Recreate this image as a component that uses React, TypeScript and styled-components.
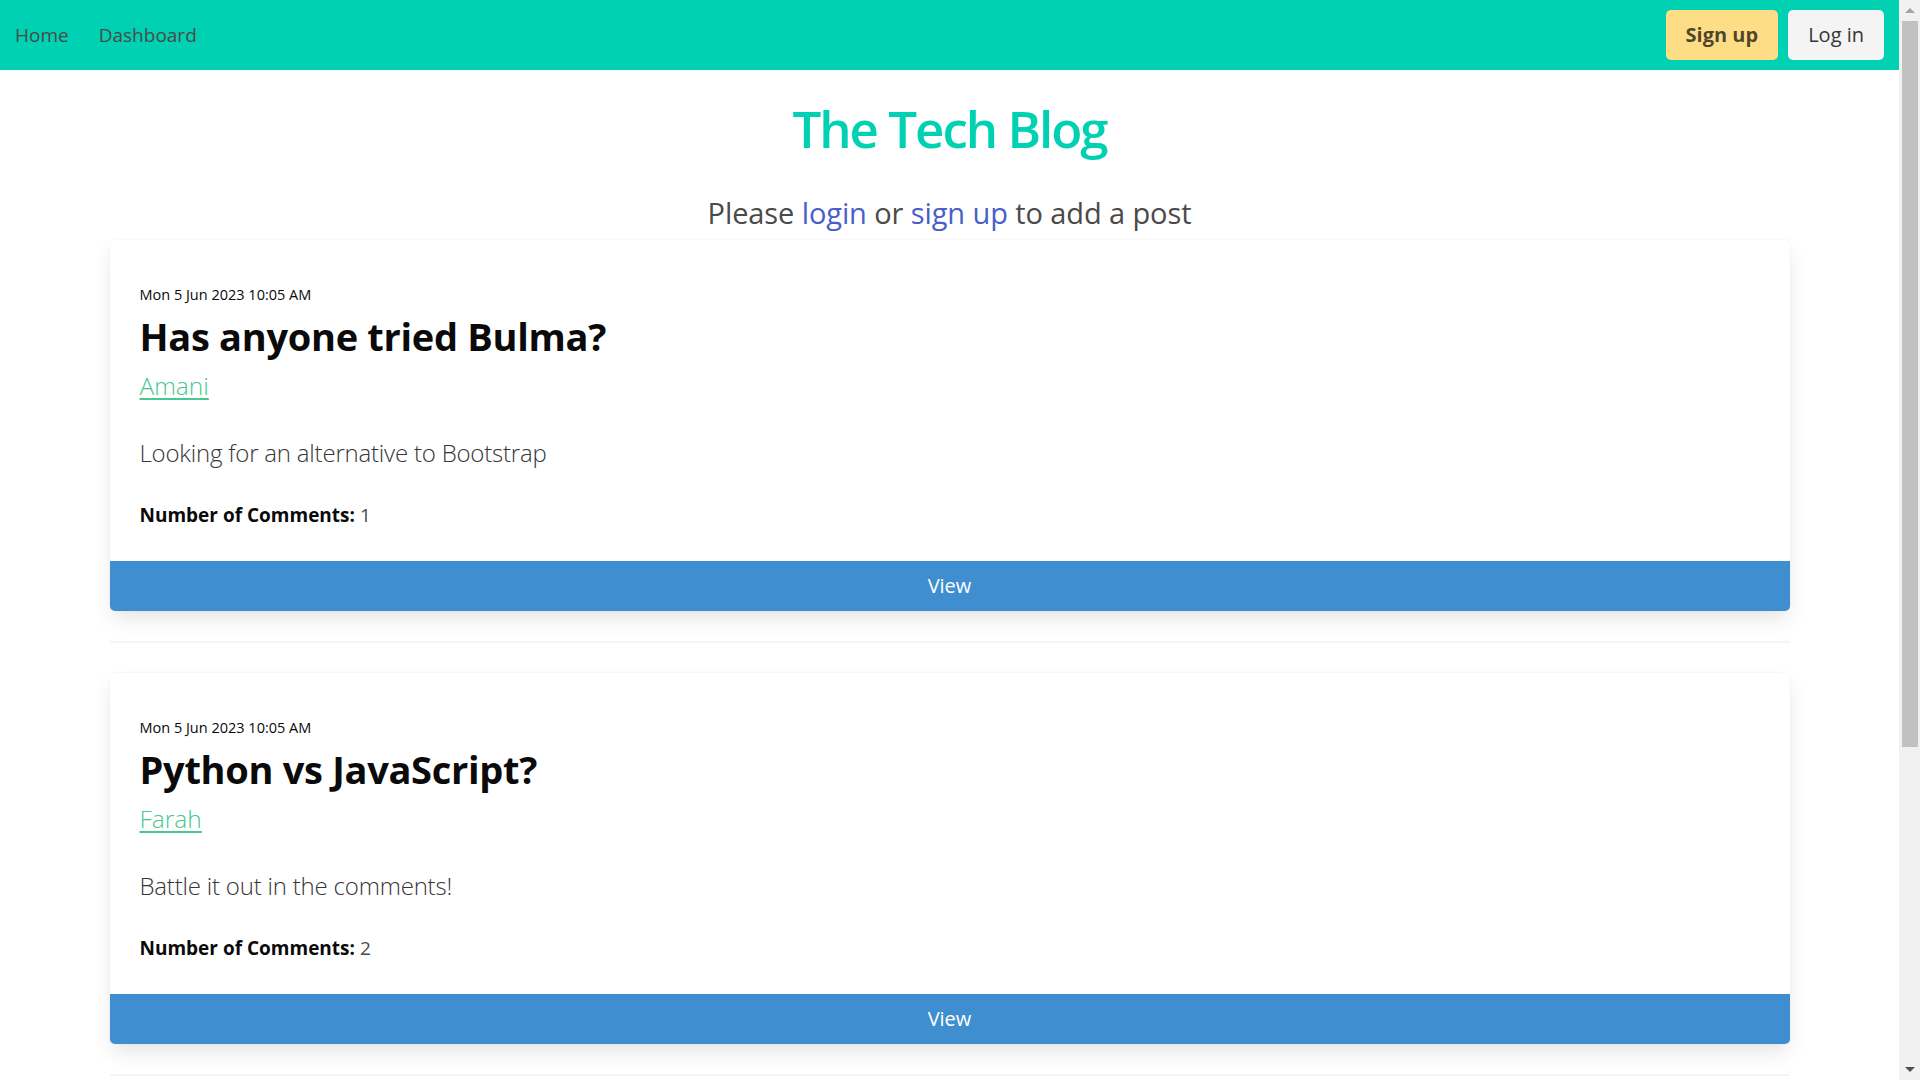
import styled, { createGlobalStyle } from 'styled-components';

type Post = {
  id: number;
  date: string;
  title: string;
  author: string;
  body: string;
  comments: number;
};

const posts: Post[] = [
  {
    id: 1,
    date: 'Mon 5 Jun 2023 10:05 AM',
    title: 'Has anyone tried Bulma?',
    author: 'Amani',
    body: 'Looking for an alternative to Bootstrap',
    comments: 1,
  },
  {
    id: 2,
    date: 'Mon 5 Jun 2023 10:05 AM',
    title: 'Python vs JavaScript?',
    author: 'Farah',
    body: 'Battle it out in the comments!',
    comments: 2,
  },
];

const GlobalStyle = createGlobalStyle`
  html, body {
    overflow: hidden;
  }
  body {
    margin: 0;
    background: #fff;
    font-family: 'Open Sans', 'Noto Sans', sans-serif;
    color: #4a4a4a;
    font-size: 20px;
    line-height: 1.5;
  }
  * {
    box-sizing: border-box;
  }
`;

const Viewport = styled.div`
  display: flex;
  height: 100vh;
`;

const Page = styled.div`
  flex: 1;
  min-width: 0;
  overflow: hidden;
`;

const ScrollTrack = styled.aside`
  width: 21px;
  flex-shrink: 0;
  background: #f1f1f1;
  display: flex;
  flex-direction: column;
  align-items: center;
`;

const ScrollArrow = styled.div<{ $down?: boolean }>`
  height: 21px;
  width: 100%;
  display: flex;
  align-items: center;
  justify-content: center;

  &::before {
    content: '';
    border-left: 5px solid transparent;
    border-right: 5px solid transparent;
    ${({ $down }) =>
      $down ? 'border-top: 5px solid #505050;' : 'border-bottom: 5px solid #a3a3a3;'}
  }
`;

const ScrollThumb = styled.div`
  width: 16px;
  margin-left: 1px;
  height: 726px;
  background: #c1c1c1;
`;

const ScrollRest = styled.div`
  flex: 1;
`;

const Navbar = styled.nav`
  height: 70px;
  background: #00d1b2;
  display: flex;
  align-items: center;
  justify-content: space-between;
`;

const NavStart = styled.div`
  display: flex;
  align-items: center;
`;

const NavItem = styled.a`
  padding: 10px 15px;
  color: #4a4a4a;
  font-size: 19px;
  line-height: 30px;
  text-decoration: none;
  cursor: pointer;
`;

const NavEnd = styled.div`
  display: flex;
  gap: 10px;
  padding: 10px 15px;
`;

const NavButton = styled.a<{ $variant: 'warning' | 'light' }>`
  height: 50px;
  padding: 0 20px;
  display: inline-flex;
  align-items: center;
  border-radius: 5px;
  font-size: 20px;
  cursor: pointer;
  background: ${({ $variant }) => ($variant === 'warning' ? '#fedd87' : '#f4f4f4')};
  color: ${({ $variant }) => ($variant === 'warning' ? 'rgba(0, 0, 0, 0.7)' : '#363636')};
  font-weight: ${({ $variant }) => ($variant === 'warning' ? 700 : 400)};
`;

const Container = styled.main`
  width: 1680px;
  margin: 0 auto;
  padding-top: 25px;
`;

const Heading = styled.h1`
  margin: 0;
  text-align: center;
  color: #00d1b2;
  font-size: 51px;
  font-weight: 600;
  letter-spacing: -2px;
  line-height: 67.5px;
`;

const Subtitle = styled.p`
  margin: 31px 0 9px;
  text-align: center;
  font-size: 29px;
  letter-spacing: -0.1px;
  line-height: 37.5px;
  color: #4a4a4a;

  a {
    color: #485fc7;
    text-decoration: none;
  }
`;

const Card = styled.article`
  background: #fff;
  border-radius: 5px;
  box-shadow: 0 10px 20px -2.5px rgba(10, 10, 10, 0.1), 0 0 0 1px rgba(10, 10, 10, 0.02);
`;

const CardContent = styled.div`
  padding: 44px 30px 31px;
`;

const PostDate = styled.p`
  margin: 0;
  font-size: 14.5px;
  line-height: 22.5px;
  color: #0a0a0a;
`;

const PostTitle = styled.h2`
  margin: 4px 0 0;
  font-size: 38px;
  font-weight: 700;
  letter-spacing: -0.3px;
  line-height: 50px;
  color: #0a0a0a;
`;

const Author = styled.a`
  display: inline-block;
  margin-top: 6px;
  font-size: 24.5px;
  font-weight: 300;
  line-height: 37.5px;
  color: #48c78e;
  text-decoration: underline;
  text-underline-offset: 3px;
`;

const Body = styled.p`
  margin: 30px 0 0;
  font-size: 24px;
  font-weight: 300;
  letter-spacing: -0.2px;
  line-height: 37.5px;
  color: #363636;
`;

const Comments = styled.p`
  margin: 28px 0 0;
  font-size: 19px;
  line-height: 30px;
  color: #4a4a4a;

  strong {
    color: #0a0a0a;
    font-weight: 700;
  }
`;

const ViewButton = styled.button`
  display: block;
  width: 100%;
  height: 50px;
  border: none;
  border-radius: 0 0 5px 5px;
  background: #3e8ed0;
  color: #fff;
  font-family: inherit;
  font-size: 20px;
  cursor: pointer;
`;

const Divider = styled.hr`
  margin: 30px 0;
  border: none;
  height: 2.5px;
  background: #f5f5f5;
`;

export default function App() {
  return (
    <>
      <GlobalStyle />
      <Viewport>
        <Page>
          <Navbar>
            <NavStart>
              <NavItem>Home</NavItem>
              <NavItem>Dashboard</NavItem>
            </NavStart>
            <NavEnd>
              <NavButton $variant="warning">Sign up</NavButton>
              <NavButton $variant="light">Log in</NavButton>
            </NavEnd>
          </Navbar>
          <Container>
            <Heading>The Tech Blog</Heading>
            <Subtitle>
              Please <a>login</a> or <a>sign up</a> to add a post
            </Subtitle>
            {posts.map((post) => (
              <section key={post.id}>
                <Card>
                  <CardContent>
                    <PostDate>{post.date}</PostDate>
                    <PostTitle>{post.title}</PostTitle>
                    <Author>{post.author}</Author>
                    <Body>{post.body}</Body>
                    <Comments>
                      <strong>Number of Comments:</strong> {post.comments}
                    </Comments>
                  </CardContent>
                  <ViewButton>View</ViewButton>
                </Card>
                <Divider />
              </section>
            ))}
          </Container>
        </Page>
        <ScrollTrack>
          <ScrollArrow />
          <ScrollThumb />
          <ScrollRest />
          <ScrollArrow $down />
        </ScrollTrack>
      </Viewport>
    </>
  );
}
